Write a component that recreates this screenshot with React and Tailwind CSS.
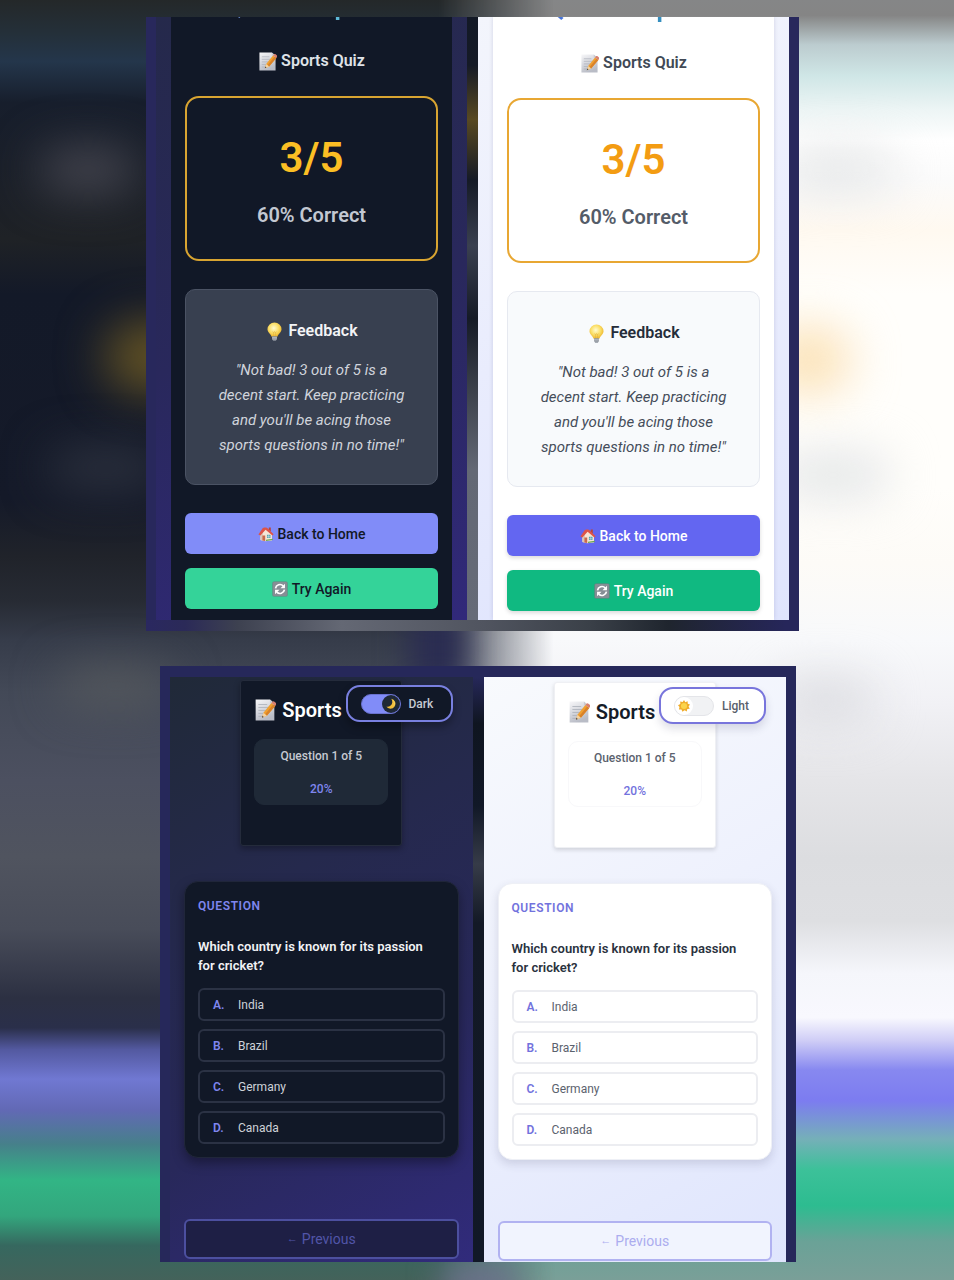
import React from "react";

function MemoIcon({ className }) {
  return (
    <svg viewBox="0 0 20 20" className={className} aria-hidden="true">
      <defs>
        <linearGradient id="memoPaper" x1="0" y1="0" x2="0.4" y2="1">
          <stop offset="0" stopColor="#f7f7f9" />
          <stop offset="1" stopColor="#b9bcc6" />
        </linearGradient>
      </defs>
      <path d="M1.5 .5H14.5L18.5 4V19.5H1.5Z" fill="url(#memoPaper)" />
      <path d="M14.5 .5L18.5 4H14.5Z" fill="#c9ccd3" />
      <path d="M4 5H12M4 7.7H14M4 10.4H11M4 13.1H9M4 15.8H8" stroke="#a9aeb8" strokeWidth=".7" />
      <path d="M7.2 17L8.6 12.6L15.8 3.6L19.3 6.3L11.7 15.2Z" fill="#f0a030" />
      <path d="M10.1 13.8L17.4 4.9L19.3 6.3L11.7 15.2Z" fill="#d9822a" />
      <path d="M15.8 3.6L17 2.2Q17.7 1.7 18.6 2.4L20 3.6Q20.4 4.4 19.9 5.4L19.3 6.3Z" fill="#d8806f" />
      <path d="M7.2 17L8.6 12.6L11.7 15.2Z" fill="#f2d3a4" />
      <path d="M7.2 17L7.7 15.3L8.9 16.3Z" fill="#3b3b42" />
    </svg>
  );
}

function BulbIcon({ className }) {
  return (
    <svg viewBox="0 0 20 20" className={className} aria-hidden="true">
      <defs>
        <radialGradient id="bulbGlass" cx=".45" cy=".4" r=".6">
          <stop offset="0" stopColor="#fffbd0" />
          <stop offset=".55" stopColor="#fbe06a" />
          <stop offset="1" stopColor="#edb52c" />
        </radialGradient>
      </defs>
      <path d="M10 .5A7.4 7.2 0 0 1 17.4 7.7C17.4 11 14 12.5 13 15.5H7C6 12.5 2.6 11 2.6 7.7A7.4 7.2 0 0 1 10 .5Z" fill="url(#bulbGlass)" />
      <path d="M8 10L9 11.5L10 10L11 11.5L12 10M9 11.5V15M11 11.5V15" stroke="#e0a935" strokeWidth=".5" fill="none" />
      <path d="M7.4 15H12.6V18L11.4 19.7H8.6L7.4 18Z" fill="#8d939c" />
      <path d="M7.4 16.3H12.6M7.4 17.8H12.6" stroke="#c9cdd3" strokeWidth=".6" />
    </svg>
  );
}

function HouseIcon({ className }) {
  return (
    <svg viewBox="0 0 20 20" className={className} aria-hidden="true">
      <path d="M13.5 2H16V7L13.5 5Z" fill="#b8453a" />
      <path d="M3 9.5L9 3L17.5 9.5V18L9 19L3 17.5Z" fill="#f6e5d6" />
      <path d="M3 9.5L6 7V18.2L3 17.5Z" fill="#dcc5b4" />
      <path d="M.5 10.5L6 2.5Q6.8 1.8 8 1.8H10Q11 1.8 12 2.8L19.5 10.3L18 11.8L9.5 4.8L3 12Z" fill="#dd5448" />
      <path d="M5.5 12H9V18.7L5.5 18.1Z" fill="#c9694a" />
      <path d="M11.2 11H15.6V14.8H11.2Z" fill="#3f9fb0" />
      <path d="M13.4 11V14.8M11.2 12.9H15.6" stroke="#f8f3ec" strokeWidth=".6" />
      <path d="M10 18.9L18.5 17.6V16L10 17.3Z" fill="#6aa84f" />
    </svg>
  );
}

function RefreshIcon({ className }) {
  return (
    <svg viewBox="0 0 20 20" className={className} aria-hidden="true">
      <rect x=".5" y=".5" width="19" height="19" rx="2" fill="#737b82" />
      <rect x="1.3" y="1.3" width="17.4" height="17.4" rx="1.5" fill="#868e95" />
      <path d="M4.4 9.2A5.7 5.7 0 0 1 14 6M15.6 10.8A5.7 5.7 0 0 1 6 14" fill="none" stroke="#fff" strokeWidth="2.1" />
      <path d="M16.2 3.4V9H10.6Z M3.8 16.6V11H9.4Z" fill="#fff" />
    </svg>
  );
}

function MoonIcon({ className }) {
  return (
    <svg viewBox="0 0 20 20" className={className} aria-hidden="true">
      <path d="M11.5 1.2A9.2 9.2 0 1 1 2.2 15.5C7 17 12.8 13.5 13.2 8C13.3 5 12.6 2.8 11.5 1.2Z" fill="#f3bf3c" />
      <path d="M13.9 2.6A9.2 9.2 0 0 1 15.6 15C17 9.5 16.2 5.7 13.9 2.6Z" fill="#fbdc70" />
    </svg>
  );
}

function SunIcon({ className }) {
  return (
    <svg viewBox="0 0 20 20" className={className} aria-hidden="true">
      <path d="M10 0L12.2 3.6L16 1.9L16.3 6.2L20 7.6L17.6 10.8L19.6 14.4L15.5 15.2L14.6 19.3L11 17.2L7.4 19.6L5.8 15.8L1.5 15.9L2.5 11.8L0 8.6L3.9 6.7L3.7 2.4L7.8 3.5Z" fill="#f0ad2b" />
      <circle cx="10" cy="10.1" r="5.1" fill="#fbd44c" />
    </svg>
  );
}

const themes = {
  dark: {
    label: "Dark",
    side: "bg-[linear-gradient(160deg,#25294b_0%,#29285c_50%,#31297a_100%)]",
    resultPad: "-mt-6",
    resultCard: "bg-[#111827] pb-[11px]",
    title: "from-[#818cf8] to-[#2dd4bf]",
    sub: "text-[#dfe2e8]",
    scoreBox: "border-[#d8a431]",
    score: "text-[#fbbf24]",
    percent: "text-[#c3c8d2]",
    feedback: "bg-[#384050] border-[#4b5364]",
    heading: "text-[#f3f4f6]",
    message: "text-[#d0d4dc]",
    home: "bg-[#818cf8] text-[#111827]",
    again: "bg-[#34d399] text-[#111827]",
    page: "bg-[linear-gradient(150deg,#202938_0%,#25294d_35%,#28285a_65%,#312b7c_100%)] pt-[3px]",
    card: "bg-[#111827] border-[#242b3b] shadow-[0_3px_6px_rgba(0,0,0,0.3)]",
    quizTitle: "text-white",
    progress: "bg-[#1f2937] border-[#1f2937]",
    progressText: "text-[#c6cad2]",
    accent: "text-[#7f86ee]",
    qCard: "bg-[#111827] border-[#20263a] shadow-[0_5px_12px_rgba(0,0,0,0.35)]",
    question: "text-[#f1f2f5]",
    option: "border-[#2b3244] text-[#ced2d9]",
    previous: "bg-[#1e1f45] border-[#4c4f9f] text-[#5155a8]",
    pill: "bg-[#111827] border-[#7980e0] shadow-[0_5px_8px_rgba(0,0,0,0.3)]",
    track: "bg-[#818cf8] border-[#6a72cf] justify-end",
    knob: "bg-[#1f2937]",
    pillText: "text-[#c6cad2]",
  },
  light: {
    label: "Light",
    side: "bg-[linear-gradient(160deg,#f3f5fc_0%,#e9ecfd_50%,#dfe4fd_100%)]",
    resultPad: "-mt-[22px]",
    resultCard: "bg-white pb-[9px] shadow-[0_0_4px_rgba(60,60,110,0.18)]",
    title: "from-[#4f63e8] to-[#1ba5a0]",
    sub: "text-[#414955]",
    scoreBox: "border-[#e8a733]",
    score: "text-[#f39c12]",
    percent: "text-[#545c68]",
    feedback: "bg-[#f8fafc] border-[#e6e9f0]",
    heading: "text-[#252d3a]",
    message: "text-[#454d5a]",
    home: "bg-[#6366f1] text-white shadow-[0_2px_4px_rgba(0,0,0,0.15)]",
    again: "bg-[#10b981] text-white shadow-[0_2px_4px_rgba(0,0,0,0.15)]",
    page: "bg-[linear-gradient(150deg,#f8fafd_0%,#eef1fd_45%,#dfe5fd_100%)] pt-[5px]",
    card: "bg-white border-[#eff0f4] shadow-[0_2px_4px_rgba(0,0,0,0.14)]",
    quizTitle: "text-[#151c28]",
    progress: "bg-white border-[#f8f8fa]",
    progressText: "text-[#5b626e]",
    accent: "text-[#7272dd]",
    qCard: "bg-white border-[#eef0f6] shadow-[0_4px_10px_rgba(50,50,90,0.16)]",
    question: "text-[#2a323e]",
    option: "border-[#ecedf1] text-[#5b626e]",
    previous: "bg-[#f1f4fe] border-[#b1b2f1] text-[#acadef]",
    pill: "bg-white border-[#7875dc] shadow-[0_5px_8px_rgba(50,50,90,0.15)]",
    track: "bg-[#f1f2f4] border-[#e4e5e9] justify-start",
    knob: "bg-white",
    pillText: "text-[#59606b]",
  },
};

function ResultPhone({ theme }) {
  const t = themes[theme];
  return (
    <section className={`min-w-0 flex-1 overflow-hidden px-[15px] ${t.side}`} aria-label={`Result, ${t.label} theme`}>
      <div className={`px-3.5 text-center ${t.resultCard}`}>
        <div className="flow-root">
          <h1 className={`bg-gradient-to-r bg-clip-text text-[25px] leading-7 font-bold text-transparent ${t.title} ${t.resultPad}`}>
            Quiz Complete!
          </h1>
          <h2 className={`mt-7 flex items-center justify-center gap-1 text-base leading-6 font-semibold ${t.sub}`}>
            <MemoIcon className="size-[19px]" />
            Sports Quiz
          </h2>
        </div>
        <div className={`mt-[23px] rounded-[14px] border-2 pt-[35px] pb-[30px] ${t.scoreBox}`}>
          <p className={`text-[42px] leading-[50px] font-semibold ${t.score}`}>3/5</p>
          <p className={`mt-[18px] text-xl leading-7 font-semibold ${t.percent}`}>60% Correct</p>
        </div>
        <div className={`mt-7 rounded-[10px] border px-7 pt-[29px] pb-[26px] ${t.feedback}`}>
          <h3 className={`flex items-center justify-center gap-1 text-base leading-6 font-semibold ${t.heading}`}>
            <BulbIcon className="size-[19px]" />
            Feedback
          </h3>
          <p className={`mt-[15px] text-[15px] leading-[25px] italic ${t.message}`}>
            "Not bad! 3 out of 5 is a<br />
            decent start. Keep practicing<br />
            and you'll be acing those<br />
            sports questions in no time!"
          </p>
        </div>
        <div className="mt-7 flex flex-col gap-3.5">
          <button type="button" className={`flex h-[41px] items-center justify-center gap-1 rounded-md text-sm font-medium ${t.home}`}>
            <HouseIcon className="size-4" />
            Back to Home
          </button>
          <button type="button" className={`flex h-[41px] items-center justify-center gap-1 rounded-md text-sm font-medium ${t.again}`}>
            <RefreshIcon className="size-4" />
            Try Again
          </button>
        </div>
      </div>
    </section>
  );
}

const options = [
  ["A.", "India"],
  ["B.", "Brazil"],
  ["C.", "Germany"],
  ["D.", "Canada"],
];

function QuizPhone({ theme }) {
  const t = themes[theme];
  const id = `theme-${theme}`;
  return (
    <section className={`min-w-0 flex-1 overflow-hidden px-3.5 ${t.page}`} aria-label={`Quiz, ${t.label} theme`}>
      <div className="relative">
        <header className={`mx-auto w-[162px] rounded-[3px] border px-[13px] pt-[15px] pb-10 ${t.card}`}>
          <h1 className={`flex items-center gap-1.5 text-xl leading-7 font-semibold ${t.quizTitle}`}>
            <MemoIcon className="size-[22px]" />
            Sports
          </h1>
          <div className={`mt-[15px] flex flex-col gap-[15px] rounded-[10px] border pt-[7px] pb-1.5 text-center text-xs leading-[18px] font-medium ${t.progress}`}>
            <p className={t.progressText}>Question 1 of 5</p>
            <p className={t.accent}>20%</p>
          </div>
        </header>
        <label
          htmlFor={id}
          className={`absolute top-[5px] right-1.5 flex h-[37px] w-[107px] items-center gap-2 rounded-[14px] border-2 pl-[13px] text-xs font-medium ${t.pill} ${t.pillText}`}
        >
          <input id={id} type="checkbox" defaultChecked={theme === "dark"} className="sr-only" />
          <span className={`flex h-5 w-10 items-center rounded-full border ${t.track}`}>
            <span className={`flex size-[18px] items-center justify-center rounded-full ${t.knob}`}>
              {theme === "dark" ? <MoonIcon className="size-[11px]" /> : <SunIcon className="size-3" />}
            </span>
          </span>
          {t.label}
        </label>
      </div>
      <main className={`mt-[35px] rounded-[14px] border px-[13px] pt-[15px] pb-[13px] ${t.qCard}`}>
        <p className={`text-xs leading-[18px] font-semibold tracking-wider ${t.accent}`}>QUESTION</p>
        <h2 className={`mt-[22px] text-[13px] leading-[19px] font-semibold ${t.question}`}>
          Which country is known for its passion<br />
          for cricket?
        </h2>
        <div className="mt-[13px] flex flex-col gap-2">
          {options.map(([letter, name]) => (
            <button
              key={letter}
              type="button"
              className={`flex h-[33px] items-center rounded-md border-2 px-[13px] text-left text-xs ${t.option}`}
            >
              <span className={`w-[25px] font-semibold ${t.accent}`}>{letter}</span>
              {name}
            </button>
          ))}
        </div>
      </main>
      <button
        type="button"
        className={`mt-[61px] mb-px flex h-10 w-full items-center justify-center gap-1 rounded-md border-2 text-sm ${t.previous}`}
      >
        <span className="text-[11px]">←</span>
        Previous
      </button>
    </section>
  );
}

function Backdrop() {
  return (
    <div
      aria-hidden="true"
      className="absolute inset-0 overflow-hidden bg-[linear-gradient(to_bottom,#858687_0%,#858585_1.2%,#bccccf_3.5%,#cfe6e6_5.9%,#edf5f5_8.6%,#ffffff_11%,#fbfbfb_14%,#fff9f0_18%,#fffefb_23%,#fffefb_38%,#fdfbf7_44%,#f8f9fb_50%,#f1f1f5_55%,#e5e5e8_61%,#dcdde0_67%,#dedfe2_72%,#f5f6fb_76%,#f8f8fe_79.5%,#cfcdf6_81.3%,#8788f0_83.6%,#7c7cf0_86%,#75b0b8_89%,#3cc199_91.4%,#2dbc90_94.2%,#6aa297_97%,#7a9f98_100%)]"
    >
      <div className="absolute inset-0 bg-[linear-gradient(to_bottom,#242829_0%,#24303a_2.7%,#24364b_4.8%,#171e2c_8%,#1a1f29_13%,#1f2226_18.7%,#131928_23%,#151a29_39%,#20232a_43.5%,#272b34_47%,#363c4a_50%,#434957_54%,#4c5060_61%,#50545f_67%,#484c59_72.6%,#2c3042_78%,#2a2f4a_80.3%,#5359a0_82%,#7078d2_84.3%,#6269b5_86.7%,#46808a_89.4%,#32b585_92.2%,#33a67d_95%,#36685f_97.3%,#44625a_100%)] [mask-image:linear-gradient(to_right,black_46%,transparent_58%)]" />
      <div className="absolute top-[150px] left-[40px] h-10 w-24 rounded-full bg-[#4b4b55] blur-xl" />
      <div className="absolute top-[322px] left-[105px] h-[70px] w-24 rounded-full bg-[#655424] blur-xl" />
      <div className="absolute top-[450px] left-[50px] h-9 w-28 rounded-full bg-[#303542] blur-xl" />
      <div className="absolute top-[670px] left-[60px] h-8 w-28 rounded-full bg-[#5a5d5f] blur-xl" />
      <div className="absolute top-[610px] left-[410px] h-[76px] w-14 bg-[#2a2c52] blur-lg" />
      <div className="absolute top-[150px] right-[60px] h-10 w-28 rounded-full bg-[#e3e5e6] blur-xl" />
      <div className="absolute top-[328px] right-[105px] h-16 w-20 rounded-full bg-[#fbdfb0] blur-xl" />
      <div className="absolute top-[455px] right-[65px] h-10 w-28 rounded-full bg-[#e0e3e5] blur-xl" />
      <div className="absolute top-[680px] right-[80px] h-10 w-24 rounded-full bg-[#d9dade] blur-xl" />
      <div className="absolute top-[1265px] left-[440px] h-8 w-20 rounded-full bg-[#6f7090] blur-lg" />
    </div>
  );
}

export default function App() {
  return (
    <div className="relative min-h-screen pt-[17px] pb-[18px] font-['Roboto','Liberation_Sans',sans-serif]">
      <Backdrop />
      <div className="relative pr-[155px] pl-[146px]">
        <div className="bg-[linear-gradient(to_right,#2a2860_0%,#2b2a58_6%,#3d4150_14%,#646874_30%,#50545f_52%,#3a4048_68%,#1f252e_80%,#26265a_98%)] pb-[11px]">
          <div className="flex gap-[11px] border-x-[10px] border-[#28285c] bg-[linear-gradient(to_bottom,#131926_0%,#151a26_8%,#584922_17%,#151a26_27%,#3a4050_38%,#151a26_50%,#3c414c_62%,#636875_75%,#666b78_100%)]">
            <ResultPhone theme="dark" />
            <ResultPhone theme="light" />
          </div>
        </div>
      </div>
      <div className="relative mt-[35px] pr-[158px] pl-[160px]">
        <div className="flex gap-[11px] border-x-[10px] border-t-[11px] border-[#26285a] bg-[linear-gradient(to_bottom,#26285a_0%,#0f1520_8%,#111827_22%,#363b48_32%,#131926_42%,#111827_100%)]">
          <QuizPhone theme="dark" />
          <QuizPhone theme="light" />
        </div>
      </div>
    </div>
  );
}
